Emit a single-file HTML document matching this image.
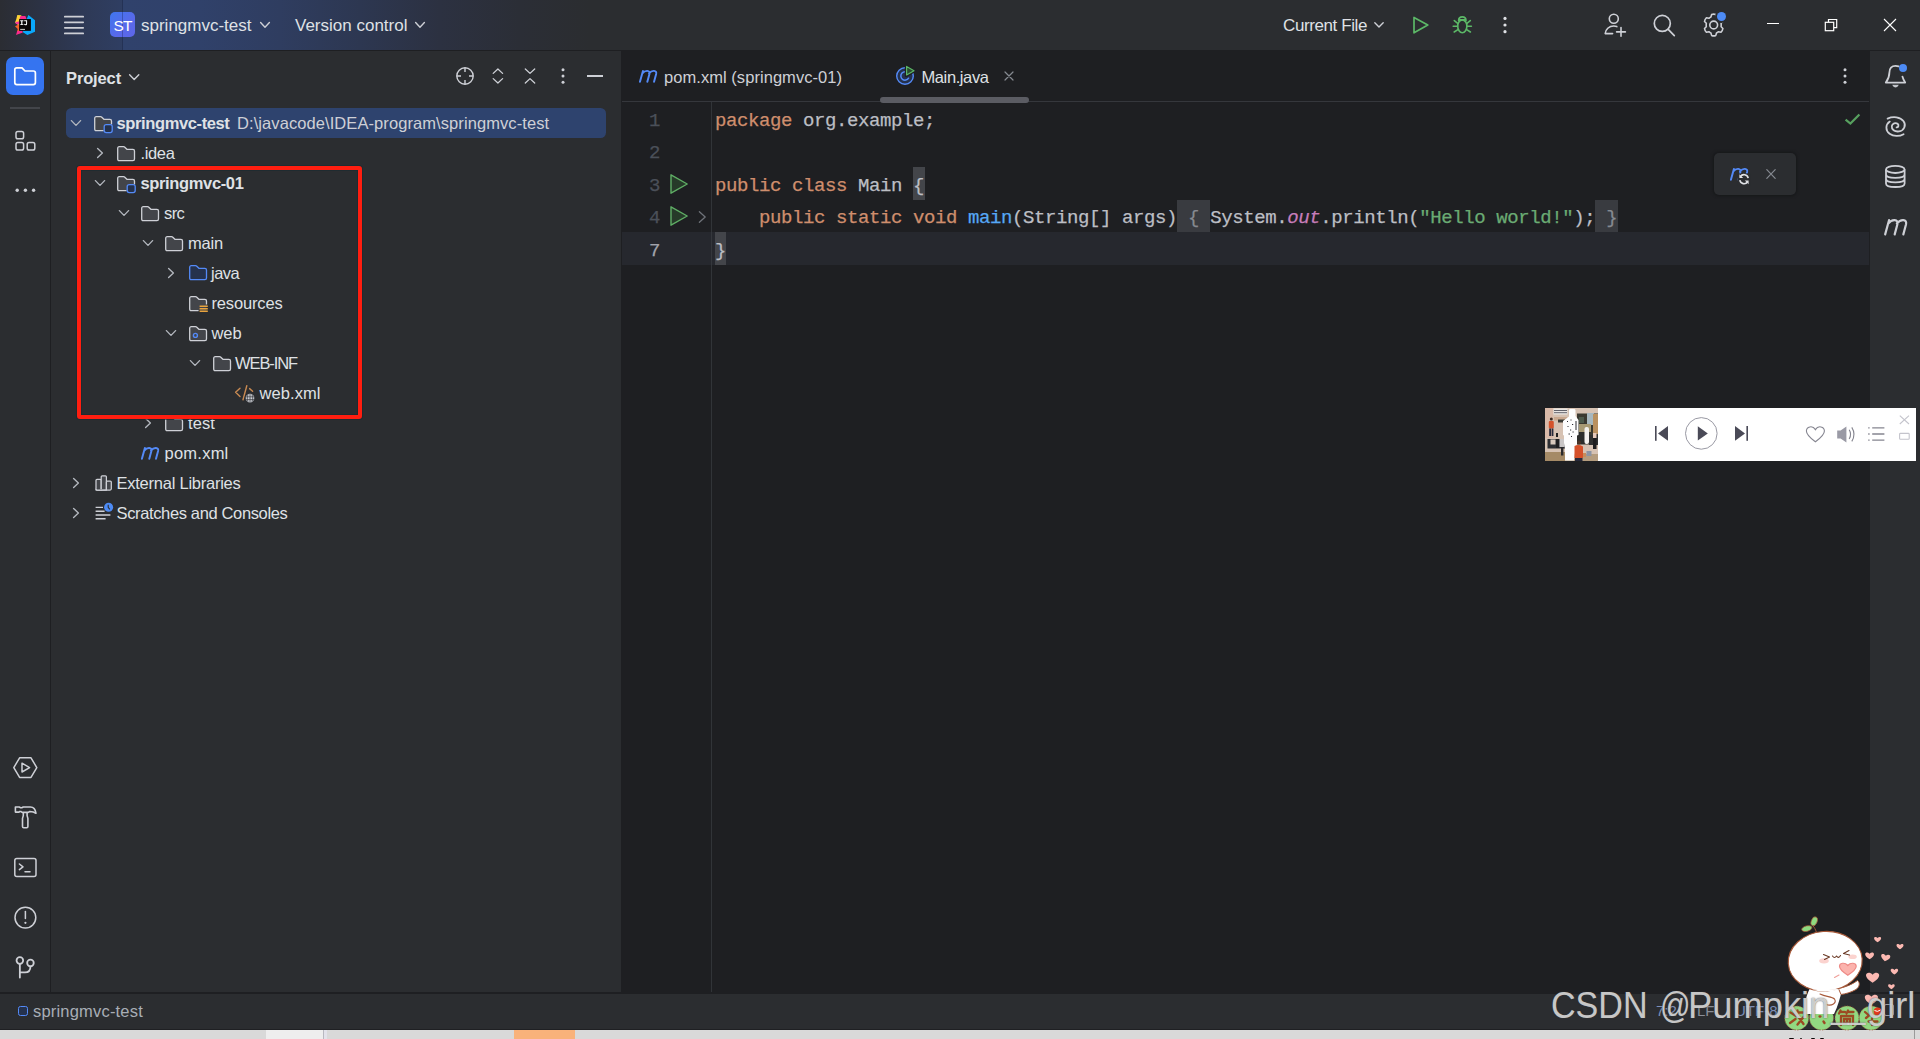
<!DOCTYPE html>
<html>
<head>
<meta charset="utf-8">
<title>springmvc-test</title>
<style>
*{box-sizing:border-box;margin:0;padding:0}
html,body{width:1920px;height:1039px;overflow:hidden;background:#2b2d30}
body{position:relative;font-family:"Liberation Sans",sans-serif;font-size:16px;color:#dfe1e5;-webkit-font-smoothing:antialiased}
.abs{position:absolute}
svg{position:absolute;overflow:visible}
.t{position:absolute;white-space:pre;line-height:20px;height:20px}
/* ---------- main blocks ---------- */
#titlebar{left:0;top:0;width:1920px;height:50px;background:#2b2d30}
#titlegrad{left:0;top:0;width:640px;height:50px;background:linear-gradient(90deg,#2b2d33 0px,#2c3244 40px,#2e3955 80px,#2f3e62 122px,#30426c 123px,#30416a 200px,#2f3d60 280px,#2d3751 360px,#2c3141 440px,#2b2e36 520px,#2b2d30 590px)}
#hline-top{left:0;top:50px;width:1920px;height:1px;background:#1e1f22}
#leftstrip{left:0;top:51px;width:50px;height:942px;background:#2b2d30}
#vline-left{left:50px;top:51px;width:1px;height:942px;background:#1e1f22}
#project{left:51px;top:51px;width:570px;height:942px;background:#2b2d30}
#editor{left:621px;top:51px;width:1249px;height:942px;background:#1e1f22}
#rightstrip{left:1870px;top:51px;width:50px;height:942px;background:#2b2d30}
#hline-bot{left:0;top:992px;width:1920px;height:2px;background:#1e1f22}
#status{left:0;top:994px;width:1920px;height:35px;background:#2b2d30}
#status-shadow{left:0;top:1029px;width:1920px;height:1px;background:#1f2023}
#taskbar{left:0;top:1030px;width:1920px;height:9px;background:#d9d9d9}
</style>
</head>
<body>
<!-- ================= MAIN BLOCKS ================= -->
<div id="titlebar" class="abs"></div>
<div id="titlegrad" class="abs"></div>
<div id="hline-top" class="abs"></div>
<div id="leftstrip" class="abs"></div>
<div id="vline-left" class="abs"></div>
<div id="project" class="abs"></div>
<div id="editor" class="abs"></div>
<div id="rightstrip" class="abs"></div>
<div id="hline-bot" class="abs"></div>
<div id="status" class="abs"></div>
<div id="status-shadow" class="abs"></div>
<div id="taskbar" class="abs"></div>

<!-- ================= TITLE BAR ================= -->
<!-- IJ logo -->
<svg style="left:10px;top:10px" width="30" height="30" viewBox="10 10 30 30">
  <path d="M17.3 15 L21.5 15.3 L19.5 19.5 L19.3 26 L15 22.6 L16.2 19.5 Z" fill="#fcd236"/>
  <path d="M20.6 15.9 L25.4 16 L26.6 19.3 L19.4 19.3 Z" fill="#fb2a8c"/>
  <path d="M15.2 22.3 L19.3 21.3 L19.3 24.5 L16 24 Z" fill="#f7349c"/>
  <path d="M15 26.3 L19.3 24.3 L19.3 31 L17 31.6 L17.8 29 Z" fill="#f9642a"/>
  <path d="M17.2 31 L22.4 30.8 L22.8 32.4 L16 35 Z" fill="#fb2a8c"/>
  <path d="M28.4 15 L35 20.3 L35 31.7 L27.4 35.1 L22.9 32.2 L23 30.7 L30.8 30.7 L30.8 19.2 L26.6 19.2 Z" fill="#0aa8fb"/>
  <rect x="19.2" y="19.1" width="11.6" height="11.6" fill="#0b0606"/>
  <path d="M20.2 20.3h3.2v0.9h-1v3h1v0.9h-3.2v-0.9h1v-3h-1z M24.2 20.3h2.9v3.4c0 1-.6 1.5-1.5 1.5c-.8 0-1.3-.3-1.6-.8l.7-.6c.2.3.4.5.8.5c.4 0 .6-.2.6-.7v-2.4h-1.9z" fill="#fff"/>
  <rect x="20.2" y="28.9" width="4.8" height="0.9" fill="#e8e4e0"/>
</svg>
<!-- hamburger -->
<svg style="left:60px;top:10px" width="30" height="30" viewBox="60 10 30 30" fill="none" stroke="#ced0d6" stroke-width="1.7" stroke-linecap="round">
  <path d="M64.8 16.7H83.2M64.8 22.3H83.2M64.8 27.8H83.2M64.8 33.4H83.2"/>
</svg>
<!-- ST badge -->
<div class="abs" style="left:110px;top:12px;width:25px;height:25px;border-radius:5px;background:linear-gradient(135deg,#3f76ee 0%,#5869ea 60%,#5d66e9 100%)"></div>
<div class="abs" style="left:122px;top:0;width:1px;height:50px;background:rgba(10,16,40,.28)"></div>
<div class="t" style="left:113.6px;top:15.5px;font-size:15.5px;letter-spacing:-1px;color:#fff">ST</div>
<div class="t" style="left:141px;top:16px;font-size:17px">springmvc-test</div>
<svg style="left:258px;top:18px" width="14" height="14" viewBox="258 18 14 14" fill="none" stroke="#ced0d6" stroke-width="1.4" stroke-linecap="round" stroke-linejoin="round"><path d="M260.6 22.6L265 27.2L269.4 22.6"/></svg>
<div class="t" style="left:295px;top:16px;font-size:17px">Version control</div>
<svg style="left:413px;top:18px" width="14" height="14" viewBox="413 18 14 14" fill="none" stroke="#ced0d6" stroke-width="1.4" stroke-linecap="round" stroke-linejoin="round"><path d="M415.6 22.6L420 27.2L424.4 22.6"/></svg>

<!-- right side of title bar -->
<div class="t" style="left:1283px;top:16px;font-size:17px;letter-spacing:-0.4px">Current File</div>
<svg style="left:1372px;top:18px" width="14" height="14" viewBox="1372 18 14 14" fill="none" stroke="#ced0d6" stroke-width="1.4" stroke-linecap="round" stroke-linejoin="round"><path d="M1374.8 22.8L1379 27L1383.2 22.8"/></svg>
<!-- run -->
<svg style="left:1408px;top:12px" width="26" height="26" viewBox="1408 12 26 26" fill="none" stroke="#5cb867" stroke-width="1.7" stroke-linejoin="round"><path d="M1414 17.4V32.8L1427.8 25Z"/></svg>
<!-- debug bug -->
<svg style="left:1450px;top:12px" width="26" height="26" viewBox="1450 12 26 26" fill="none" stroke="#5cb867" stroke-width="1.6" stroke-linecap="round" stroke-linejoin="round">
  <ellipse cx="1462.3" cy="26.3" rx="4.6" ry="6.4"/>
  <path d="M1458.6 20.6C1458.6 15.6 1466 15.6 1466 20.6"/>
  <path d="M1459.3 19.9H1465.3"/>
  <path d="M1457.7 23.3L1454.3 20.6M1466.9 23.3L1470.3 20.6M1457.6 26.3H1453.2M1467 26.3H1471.4M1457.9 29.6L1454.2 32M1466.7 29.6L1470.4 32"/>
</svg>
<!-- kebab -->
<svg style="left:1498px;top:12px" width="14" height="26" viewBox="1498 12 14 26" fill="#dfe1e5"><circle cx="1505" cy="18.4" r="1.6"/><circle cx="1505" cy="25" r="1.6"/><circle cx="1505" cy="31.7" r="1.6"/></svg>
<!-- add user -->
<svg style="left:1600px;top:10px" width="30" height="30" viewBox="1600 10 30 30" fill="none" stroke="#ced0d6" stroke-width="1.6" stroke-linecap="round" stroke-linejoin="round">
  <circle cx="1613.8" cy="18.8" r="4.5"/>
  <path d="M1616.8 26.6C1615.8 26.2 1614.8 26 1613.8 26C1609 26 1605.4 29.4 1605.2 33.6H1612.6"/>
  <path d="M1621 27.6V36.2M1616.6 31.9H1625.4"/>
</svg>
<!-- search -->
<svg style="left:1650px;top:10px" width="30" height="30" viewBox="1650 10 30 30" fill="none" stroke="#ced0d6" stroke-width="1.7" stroke-linecap="round"><circle cx="1662.3" cy="23.4" r="8"/><path d="M1668.2 29.4L1674.3 35.6"/></svg>
<!-- settings gear -->
<svg style="left:1700px;top:10px" width="30" height="30" viewBox="1700 10 30 30" fill="none" stroke="#ced0d6" stroke-width="1.6" stroke-linejoin="round">
  <path d="M1711.6 14.6 Q1713.7 13.7 1715.8 14.6 L1716.5 17 Q1717.6 17.5 1718.5 18.3 L1721 17.7 Q1722.6 19.3 1722.9 21.5 L1721.1 23.3 Q1721.3 25 1721.1 26.7 L1722.9 28.5 Q1722.6 30.7 1721 32.3 L1718.5 31.7 Q1717.6 32.5 1716.5 33 L1715.8 35.4 Q1713.7 36.3 1711.6 35.4 L1710.9 33 Q1709.8 32.5 1708.9 31.7 L1706.4 32.3 Q1704.8 30.7 1704.5 28.5 L1706.3 26.7 Q1706.1 25 1706.3 23.3 L1704.5 21.5 Q1704.8 19.3 1706.4 17.7 L1708.9 18.3 Q1709.8 17.5 1710.9 17 Z"/>
  <circle cx="1713.7" cy="25" r="3.9"/>
</svg>
<div class="abs" style="left:1715px;top:10.3px;width:13px;height:13px;border-radius:50%;background:#2b2d30"></div>
<div class="abs" style="left:1717.3px;top:12.3px;width:9px;height:9px;border-radius:50%;background:#4d8bf5"></div>
<!-- window controls -->
<div class="abs" style="left:1767px;top:23px;width:12px;height:1.3px;background:#fff"></div>
<svg style="left:1820px;top:14px" width="22" height="22" viewBox="1820 14 22 22" fill="none" stroke="#fff" stroke-width="1.2"><path d="M1828.5 22V19.5H1836.7V27.7H1834"/><rect x="1825.3" y="22.3" width="8.4" height="8.4"/></svg>
<svg style="left:1880px;top:15px" width="20" height="20" viewBox="1880 15 20 20" fill="none" stroke="#fff" stroke-width="1.1"><path d="M1884 19L1896 31M1896 19L1884 31"/></svg>


<!-- ================= LEFT STRIP ================= -->
<!-- project button (active) -->
<div class="abs" style="left:6px;top:57px;width:38px;height:38px;border-radius:7px;background:#3574f0"></div>
<svg style="left:12px;top:64px" width="26" height="24" viewBox="12 64 26 24" fill="none" stroke="#fff" stroke-width="1.7" stroke-linejoin="round"><path d="M14.8 69.8Q14.8 67.8 16.8 67.8H22L25 71H33.4Q35.4 71 35.4 73V82.6Q35.4 84.6 33.4 84.6H16.8Q14.8 84.6 14.8 82.6Z"/></svg>
<div class="abs" style="left:10px;top:107px;width:30px;height:1.5px;background:#43454a"></div>
<!-- structure icon -->
<svg style="left:12px;top:128px" width="26" height="26" viewBox="12 128 26 26" fill="none" stroke="#ced0d6" stroke-width="1.5"><rect x="16" y="131.4" width="7.6" height="7.4" rx="1.8"/><rect x="16" y="142.6" width="7.6" height="7.4" rx="1.8"/><rect x="27.2" y="142.6" width="7.6" height="7.4" rx="1.8"/></svg>
<!-- more -->
<svg style="left:12px;top:180px" width="26" height="20" viewBox="12 180 26 20" fill="#ced0d6"><circle cx="17.2" cy="190.3" r="1.7"/><circle cx="25.4" cy="190.3" r="1.7"/><circle cx="33.6" cy="190.3" r="1.7"/></svg>
<!-- services/run -->
<svg style="left:10px;top:753px" width="30" height="30" viewBox="10 753 30 30" fill="none" stroke="#ced0d6" stroke-width="1.5" stroke-linejoin="round"><path d="M19.6 757.8H31L36.8 767.6L31 777.4H19.6L13.8 767.6Z"/><path d="M22 763.2V772L29.6 767.6Z"/></svg>
<!-- build hammer -->
<svg style="left:10px;top:803px" width="30" height="30" viewBox="10 803 30 30" fill="none" stroke="#ced0d6" stroke-width="1.6" stroke-linejoin="round" stroke-linecap="round"><path d="M15.4 807H19.2L20.6 807.7H21.8L23.2 807H30.4C33.6 807 35.5 809.7 36 813.3C34.2 811.9 32 811.5 29.8 811.5L28.2 812.4H22.2L20.8 811.5H19.8L19 812.1H15.4Z"/><path d="M23.3 812.8V815.6L22.5 818.4V826.5Q22.5 827.7 23.7 827.7H26.7Q27.9 827.7 27.9 826.5V818.4L27.1 815.6V812.8"/></svg>
<!-- terminal -->
<svg style="left:10px;top:853px" width="30" height="30" viewBox="10 853 30 30" fill="none" stroke="#ced0d6" stroke-width="1.5" stroke-linejoin="round" stroke-linecap="round"><rect x="14.8" y="858.6" width="21.2" height="18" rx="2"/><path d="M19.4 864L23 866.8L19.4 869.6M25 871.8H30"/></svg>
<!-- problems -->
<svg style="left:10px;top:903px" width="30" height="30" viewBox="10 903 30 30" fill="none" stroke="#ced0d6" stroke-width="1.5" stroke-linecap="round"><circle cx="25.4" cy="917.6" r="10.4"/><path d="M25.4 911.6V918.6"/><circle cx="25.4" cy="922.8" r="1.1" fill="#ced0d6" stroke="none"/></svg>
<!-- git -->
<svg style="left:10px;top:953px" width="30" height="30" viewBox="10 953 30 30" fill="none" stroke="#ced0d6" stroke-width="1.8" stroke-linecap="round"><circle cx="19.85" cy="960.5" r="3.3"/><circle cx="30.45" cy="963" r="3.3"/><path d="M19.85 964V977.6M30.45 966.4C30.45 970.6 28.4 972.3 25 972.3H20"/></svg>

<!-- ================= PROJECT PANEL ================= -->
<!--PROJECT-START-->
<svg width="0" height="0" style="left:0;top:0"><defs>
<path id="fold" d="M2.3 0.7H6.6Q7.3 0.7 7.8 1.2L9.9 3.3H15.9Q17.5 3.3 17.5 4.9V13Q17.5 14.6 15.9 14.6H2.3Q0.7 14.6 0.7 13V2.3Q0.7 0.7 2.3 0.7Z"/>
<path id="foldcut" d="M2.3 0.7H6.6Q7.3 0.7 7.8 1.2L9.9 3.3H15.9Q17.5 3.3 17.5 4.9V8.6M9.6 14.6H2.3Q0.7 14.6 0.7 13V2.3Q0.7 0.7 2.3 0.7"/>
<path id="mvn" d="M0.9 11.8L3.9 0.9M3.3 3.5C4.9 1.5 6.8 0.8 8.3 0.9C10.1 1 10.8 2.3 10.4 4L8.3 11.8M10 3.5C11.6 1.5 13.5 0.8 15 0.9C16.8 1 17.5 2.3 17.1 4L15 11.8"/>
<path id="chd" d="M-4.6 -2.4L0 2.4L4.6 -2.4"/>
<path id="chr" d="M-2.4 -4.6L2.4 0L-2.4 4.6"/>
</defs></svg>
<div class="t" style="left:66px;top:67.6px;font-size:16.5px;font-weight:700;letter-spacing:-0.13px">Project</div>
<svg style="left:127px;top:70px" width="14" height="14" viewBox="-7 -7 14 14" fill="none" stroke="#ced0d6" stroke-width="1.4" stroke-linecap="round" stroke-linejoin="round"><use href="#chd" x="0.2" y="0.2"/></svg>
<svg style="left:452px;top:63px" width="26" height="26" viewBox="452 63 26 26" fill="none" stroke="#ced0d6" stroke-width="1.4"><circle cx="465" cy="76" r="8.2"/><path d="M465 67.8V72M465 80V84.2M456.8 76H461M469 76H473.2"/></svg>
<svg style="left:488px;top:63px" width="20" height="26" viewBox="488 63 20 26" fill="none" stroke="#ced0d6" stroke-width="1.3" stroke-linecap="round" stroke-linejoin="round"><path d="M493.2 73.4L497.9 69L502.6 73.4M493.2 78.6L497.9 83L502.6 78.6"/></svg>
<svg style="left:520px;top:63px" width="20" height="26" viewBox="520 63 20 26" fill="none" stroke="#ced0d6" stroke-width="1.3" stroke-linecap="round" stroke-linejoin="round"><path d="M525.3 69L530 73.4L534.7 69M525.3 83L530 78.6L534.7 83"/></svg>
<svg style="left:556px;top:63px" width="14" height="26" viewBox="556 63 14 26" fill="#ced0d6"><circle cx="563" cy="69.7" r="1.5"/><circle cx="563" cy="76" r="1.5"/><circle cx="563" cy="82.3" r="1.5"/></svg>
<div class="abs" style="left:587px;top:75.2px;width:16px;height:1.6px;background:#ced0d6"></div>
<div class="abs" style="left:66px;top:107.5px;width:540px;height:30px;border-radius:5.5px;background:#2e436e"></div>
<svg style="left:69px;top:116.3px" width="14" height="14" viewBox="-7 -7 14 14" fill="none" stroke="#b4b8bf" stroke-width="1.35" stroke-linecap="round" stroke-linejoin="round"><use href="#chd"/></svg>
<svg style="left:94px;top:115.6px" width="22" height="20" viewBox="0 0 22 20" stroke-width="1.3" stroke-linejoin="round"><use href="#fold" fill="#43454a" stroke="none"/><use href="#foldcut" fill="none" stroke="#ced0d6"/><rect x="10.2" y="8.6" width="8" height="8" rx="2" fill="#25324d" stroke="#548af7" stroke-width="1.3"/></svg>
<div class="t" style="left:116.5px;top:113px;font-size:16.5px;font-weight:700;letter-spacing:-0.38px;">springmvc-test</div>
<div class="t" style="left:237px;top:113px;font-size:16.5px;letter-spacing:0.08px;color:#ced0d6;">D:\javacode\IDEA-program\springmvc-test</div>
<svg style="left:92.8px;top:146px" width="14" height="14" viewBox="-7 -7 14 14" fill="none" stroke="#b4b8bf" stroke-width="1.35" stroke-linecap="round" stroke-linejoin="round"><use href="#chr"/></svg>
<svg style="left:117px;top:145.6px" width="22" height="20" viewBox="0 0 22 20" stroke-width="1.3" stroke-linejoin="round"><use href="#fold" fill="#43454a" stroke="#ced0d6"/></svg>
<div class="t" style="left:140.5px;top:143px;font-size:16.5px;letter-spacing:-0.36px;">.idea</div>
<svg style="left:93px;top:176.2px" width="14" height="14" viewBox="-7 -7 14 14" fill="none" stroke="#b4b8bf" stroke-width="1.35" stroke-linecap="round" stroke-linejoin="round"><use href="#chd"/></svg>
<svg style="left:117px;top:175.6px" width="22" height="20" viewBox="0 0 22 20" stroke-width="1.3" stroke-linejoin="round"><use href="#fold" fill="#43454a" stroke="none"/><use href="#foldcut" fill="none" stroke="#ced0d6"/><rect x="10.2" y="8.6" width="8" height="8" rx="2" fill="#25324d" stroke="#548af7" stroke-width="1.3"/></svg>
<div class="t" style="left:140.5px;top:173px;font-size:16.5px;font-weight:700;letter-spacing:-0.36px;">springmvc-01</div>
<svg style="left:117px;top:206.2px" width="14" height="14" viewBox="-7 -7 14 14" fill="none" stroke="#b4b8bf" stroke-width="1.35" stroke-linecap="round" stroke-linejoin="round"><use href="#chd"/></svg>
<svg style="left:141px;top:205.6px" width="22" height="20" viewBox="0 0 22 20" stroke-width="1.3" stroke-linejoin="round"><use href="#fold" fill="#43454a" stroke="#ced0d6"/></svg>
<div class="t" style="left:164px;top:203px;font-size:16.5px;letter-spacing:-0.6px;">src</div>
<svg style="left:141px;top:236.2px" width="14" height="14" viewBox="-7 -7 14 14" fill="none" stroke="#b4b8bf" stroke-width="1.35" stroke-linecap="round" stroke-linejoin="round"><use href="#chd"/></svg>
<svg style="left:165px;top:235.6px" width="22" height="20" viewBox="0 0 22 20" stroke-width="1.3" stroke-linejoin="round"><use href="#fold" fill="#43454a" stroke="#ced0d6"/></svg>
<div class="t" style="left:188px;top:233px;font-size:16.5px;letter-spacing:-0.19px;">main</div>
<svg style="left:163.8px;top:266px" width="14" height="14" viewBox="-7 -7 14 14" fill="none" stroke="#b4b8bf" stroke-width="1.35" stroke-linecap="round" stroke-linejoin="round"><use href="#chr"/></svg>
<svg style="left:189px;top:265.4px" width="22" height="20" viewBox="0 0 22 20" stroke-width="1.3" stroke-linejoin="round"><use href="#fold" fill="#25324d" stroke="#548af7"/></svg>
<div class="t" style="left:211px;top:263px;font-size:16.5px;letter-spacing:-0.5px;">java</div>
<svg style="left:189px;top:295.6px" width="22" height="20" viewBox="0 0 22 20" stroke-width="1.3" stroke-linejoin="round"><use href="#fold" fill="#43454a" stroke="none"/><use href="#foldcut" fill="none" stroke="#ced0d6"/><path d="M10.6 10.3H18.8M10.6 12.8H18.8M10.6 15.3H18.8" stroke="#e8a33e" stroke-width="1.5" fill="none"/></svg>
<div class="t" style="left:211.5px;top:293px;font-size:16.5px;letter-spacing:-0.16px;">resources</div>
<svg style="left:164px;top:326.2px" width="14" height="14" viewBox="-7 -7 14 14" fill="none" stroke="#b4b8bf" stroke-width="1.35" stroke-linecap="round" stroke-linejoin="round"><use href="#chd"/></svg>
<svg style="left:189px;top:325.6px" width="22" height="20" viewBox="0 0 22 20" stroke-width="1.3" stroke-linejoin="round"><use href="#fold" fill="#43454a" stroke="#ced0d6"/><circle cx="6.4" cy="9.4" r="2" fill="none" stroke="#548af7" stroke-width="1.4"/></svg>
<div class="t" style="left:211.5px;top:323px;font-size:16.5px;letter-spacing:-0.09px;">web</div>
<svg style="left:188px;top:356.2px" width="14" height="14" viewBox="-7 -7 14 14" fill="none" stroke="#b4b8bf" stroke-width="1.35" stroke-linecap="round" stroke-linejoin="round"><use href="#chd"/></svg>
<svg style="left:212.6px;top:355.6px" width="22" height="20" viewBox="0 0 22 20" stroke-width="1.3" stroke-linejoin="round"><use href="#fold" fill="#43454a" stroke="#ced0d6"/></svg>
<div class="t" style="left:235px;top:353px;font-size:16.5px;letter-spacing:-1.1px;">WEB-INF</div>
<svg style="left:232px;top:382px" width="28" height="24" viewBox="232 382 28 24" fill="none" stroke-linecap="round" stroke-linejoin="round"><path d="M240 388.2L235.6 392.3L240 396.4M243 399.8L246.8 385.8M249.6 388.6L252.6 391.2" stroke="#c98a52" stroke-width="1.4"/><circle cx="250" cy="398.1" r="5.4" fill="#2b2d30" stroke="none"/><circle cx="250" cy="398.1" r="4.3" fill="#ced0d6" stroke="none"/><path d="M245.8 396.8H254.2M245.8 399.6H254.2M250 393.8V402.4M247.8 394.5Q246.6 398.1 247.8 401.7M252.2 394.5Q253.4 398.1 252.2 401.7" stroke="#43454a" stroke-width="0.8"/></svg>
<div class="t" style="left:259.5px;top:383px;font-size:16.5px;letter-spacing:0.07px;">web.xml</div>
<svg style="left:140.6px;top:416px" width="14" height="14" viewBox="-7 -7 14 14" fill="none" stroke="#b4b8bf" stroke-width="1.35" stroke-linecap="round" stroke-linejoin="round"><use href="#chr"/></svg>
<svg style="left:165px;top:415.6px" width="22" height="20" viewBox="0 0 22 20" stroke-width="1.3" stroke-linejoin="round"><use href="#fold" fill="#43454a" stroke="#ced0d6"/></svg>
<div class="t" style="left:188px;top:413px;font-size:16.5px;letter-spacing:0.1px;">test</div>
<svg style="left:140.8px;top:446.9px" width="18.3" height="12.6" viewBox="0 0 18.3 12.5" fill="none" stroke="#548af7" stroke-width="1.95" stroke-linecap="round" stroke-linejoin="round"><use href="#mvn"/></svg>
<div class="t" style="left:164.5px;top:443px;font-size:16.5px;letter-spacing:0.24px;">pom.xml</div>
<svg style="left:68.8px;top:476px" width="14" height="14" viewBox="-7 -7 14 14" fill="none" stroke="#b4b8bf" stroke-width="1.35" stroke-linecap="round" stroke-linejoin="round"><use href="#chr"/></svg>
<svg style="left:92px;top:473px" width="22" height="20" viewBox="92 473 22 20" fill="#43454a" stroke="#ced0d6" stroke-width="1.25" stroke-linejoin="round"><path d="M96 490V480.3Q96 479.3 97 479.3H100.2Q101.2 479.3 101.2 480.3V490Z"/><path d="M101.2 490V476.8Q101.2 475.8 102.2 475.8H105.4Q106.4 475.8 106.4 476.8V490Z"/><path d="M106.4 490V482Q106.4 481 107.4 481H110.3Q111.3 481 111.3 482V488.8Q111.3 490 110.1 490H97.2Q96 490 96 488.8"/></svg>
<div class="t" style="left:116.5px;top:473px;font-size:16.5px;letter-spacing:-0.24px;">External Libraries</div>
<svg style="left:68.8px;top:506px" width="14" height="14" viewBox="-7 -7 14 14" fill="none" stroke="#b4b8bf" stroke-width="1.35" stroke-linecap="round" stroke-linejoin="round"><use href="#chr"/></svg>
<svg style="left:92px;top:501px" width="24" height="22" viewBox="92 501 24 22" fill="none" stroke="#ced0d6" stroke-width="1.4"><path d="M95.6 507.4H103M95.6 511.2H104.6M95.6 515H110.4M95.6 518.8H105.6"/><circle cx="108.6" cy="507.3" r="4.5" fill="#4d8bf5" stroke="none"/><path d="M108.2 504.8V507.4L109.8 509.4" stroke="#2b2d30" stroke-width="1.1"/></svg>
<div class="t" style="left:116.5px;top:503px;font-size:16.5px;letter-spacing:-0.36px;">Scratches and Consoles</div>
<div class="abs" style="left:77px;top:166px;width:285px;height:253px;border:4px solid #ff1e10;border-radius:3px;box-shadow:0 0 0 1px rgba(24,42,48,.6),inset 0 0 0 1px rgba(24,42,48,.6)"></div>
<!--PROJECT-END-->

<!-- ================= EDITOR ================= -->
<!--EDITOR-START-->
<div class="abs" style="left:622px;top:101px;width:1247px;height:1px;background:#35373c"></div>
<div class="abs" style="left:880px;top:97px;width:149px;height:6px;border-radius:3px;background:#5b5c63"></div>
<svg style="left:638.7px;top:70px" width="18.4" height="12.5" viewBox="0 0 18.3 12.5" fill="none" stroke="#548af7" stroke-width="1.95" stroke-linecap="round" stroke-linejoin="round"><use href="#mvn"/></svg>
<div class="t" style="left:664px;top:67px;font-size:16.5px;letter-spacing:0.05px;color:#ced0d6">pom.xml (springmvc-01)</div>
<svg style="left:893px;top:63px" width="26" height="26" viewBox="893 63 26 26" fill="none"><circle cx="905" cy="76" r="8.3" fill="#25324d" stroke="#548af7" stroke-width="1.4"/><path d="M908.2 73.2A4.2 4.2 0 1 0 908.6 78.2" stroke="#548af7" stroke-width="1.5" stroke-linecap="round"/><path d="M906.3 65.2V75.8L915 70.4Z" fill="#1e1f22" stroke="#1e1f22" stroke-width="3" stroke-linejoin="round"/><path d="M906.6 66.4V75L914 70.7Z" fill="#2a4a2e" stroke="#5cb867" stroke-width="1.2" stroke-linejoin="round"/></svg>
<div class="t" style="left:921.5px;top:67px;font-size:16.5px;letter-spacing:-0.4px">Main.java</div>
<svg style="left:1000px;top:67px" width="18" height="18" viewBox="1000 67 18 18" fill="none" stroke="#868a91" stroke-width="1.2" stroke-linecap="round"><path d="M1005 72L1013 80M1013 72L1005 80"/></svg>
<svg style="left:1838px;top:63px" width="14" height="26" viewBox="1838 63 14 26" fill="#ced0d6"><circle cx="1845" cy="69.7" r="1.5"/><circle cx="1845" cy="76" r="1.5"/><circle cx="1845" cy="82.3" r="1.5"/></svg>
<div class="abs" style="left:711px;top:102px;width:1px;height:890px;background:#313438"></div>
<div class="abs" style="left:622px;top:232px;width:1247px;height:33px;background:#26282e"></div>
<div class="abs" style="left:711px;top:232px;width:1px;height:33px;background:#34373c"></div>
<div class="abs" style="left:715px;top:232px;width:11px;height:33px;background:#43454a"></div>
<div class="abs" style="left:913px;top:167px;width:11.5px;height:33px;background:#43454a"></div>
<div class="abs" style="left:1177px;top:200px;width:33px;height:32px;background:#393b40"></div>
<div class="abs" style="left:1595px;top:200px;width:23px;height:32px;background:#393b40"></div>
<div style="font-family:'Liberation Mono',monospace;font-size:19px;letter-spacing:-0.4px;-webkit-text-stroke:0.25px;line-height:32.5px;height:32.5px;white-space:pre;position:absolute;left:649px;top:104.6px;color:#4b5059">1</div>
<div style="font-family:'Liberation Mono',monospace;font-size:19px;letter-spacing:-0.4px;-webkit-text-stroke:0.25px;line-height:32.5px;height:32.5px;white-space:pre;position:absolute;left:649px;top:137.1px;color:#4b5059">2</div>
<div style="font-family:'Liberation Mono',monospace;font-size:19px;letter-spacing:-0.4px;-webkit-text-stroke:0.25px;line-height:32.5px;height:32.5px;white-space:pre;position:absolute;left:649px;top:169.6px;color:#4b5059">3</div>
<div style="font-family:'Liberation Mono',monospace;font-size:19px;letter-spacing:-0.4px;-webkit-text-stroke:0.25px;line-height:32.5px;height:32.5px;white-space:pre;position:absolute;left:649px;top:202.1px;color:#4b5059">4</div>
<div style="font-family:'Liberation Mono',monospace;font-size:19px;letter-spacing:-0.4px;-webkit-text-stroke:0.25px;line-height:32.5px;height:32.5px;white-space:pre;position:absolute;left:649px;top:234.6px;color:#a1a3ab">7</div>
<div style="font-family:'Liberation Mono',monospace;font-size:19px;letter-spacing:-0.4px;-webkit-text-stroke:0.25px;line-height:32.5px;height:32.5px;white-space:pre;position:absolute;left:715px;top:104.6px"><span style="color:#cf8e6d">package</span><span style="color:#bcbec4"> org.example;</span></div>
<div style="font-family:'Liberation Mono',monospace;font-size:19px;letter-spacing:-0.4px;-webkit-text-stroke:0.25px;line-height:32.5px;height:32.5px;white-space:pre;position:absolute;left:715px;top:169.6px"><span style="color:#cf8e6d">public class</span><span style="color:#bcbec4"> Main {</span></div>
<div style="font-family:'Liberation Mono',monospace;font-size:19px;letter-spacing:-0.4px;-webkit-text-stroke:0.25px;line-height:32.5px;height:32.5px;white-space:pre;position:absolute;left:715px;top:202.1px"><span style="color:#bcbec4">    </span><span style="color:#cf8e6d">public static void </span><span style="color:#56a8f5">main</span><span style="color:#bcbec4">(String[] args)</span><span style="color:#868a91"> { </span><span style="color:#bcbec4">System.</span><span style="color:#c77dbb;font-style:italic">out</span><span style="color:#bcbec4">.println(</span><span style="color:#6aab73">"Hello world!"</span><span style="color:#bcbec4">);</span><span style="color:#868a91"> }</span></div>
<div style="font-family:'Liberation Mono',monospace;font-size:19px;letter-spacing:-0.4px;-webkit-text-stroke:0.25px;line-height:32.5px;height:32.5px;white-space:pre;position:absolute;left:715px;top:234.6px"><span style="color:#bcbec4">}</span></div>
<svg style="left:666px;top:170.6px" width="26" height="26" viewBox="-13 -13 26 26"><path d="M-8 -9.2V9.2L8.2 0Z" fill="#263a29" stroke="#5fad65" stroke-width="1.4" stroke-linejoin="round"/></svg>
<svg style="left:666px;top:203px" width="26" height="26" viewBox="-13 -13 26 26"><path d="M-8 -9.2V9.2L8.2 0Z" fill="#263a29" stroke="#5fad65" stroke-width="1.4" stroke-linejoin="round"/></svg>
<svg style="left:695px;top:209px" width="14" height="16" viewBox="695 209 14 16" fill="none" stroke="#6f737a" stroke-width="1.3" stroke-linecap="round" stroke-linejoin="round"><path d="M699.4 211.8L705.2 217L699.4 222.2"/></svg>
<svg style="left:1842px;top:110px" width="20" height="18" viewBox="1842 110 20 18" fill="none" stroke="#57a05f" stroke-width="2.2"><path d="M1845.6 119.6L1850.4 123.6L1859.4 114.4"/></svg>
<div class="abs" style="left:1714px;top:152.5px;width:82px;height:42.5px;border-radius:5px;background:#2b2d30;box-shadow:0 0 3px 1px rgba(20,21,23,.8)"></div>
<svg style="left:1730px;top:167.8px" width="18.3" height="12.5" viewBox="0 0 18.3 12.5" fill="none" stroke="#548af7" stroke-width="1.95" stroke-linecap="round" stroke-linejoin="round"><use href="#mvn"/></svg>
<svg style="left:1734px;top:169px" width="20" height="20" viewBox="1734 169 20 20" fill="none" stroke="#dfe1e5" stroke-width="1.6" stroke-linejoin="round"><path d="M1737.4 173.4H1750.6V186H1737.4Z" fill="#2b2d30" stroke="none"/><path d="M1740.4 176.6A4.3 4.3 0 0 1 1748.2 178.2M1747.6 181.8A4.3 4.3 0 0 1 1739.8 180.2"/><path d="M1739.4 174.2V178H1743.2Z M1748.6 184.2V180.4H1744.8Z" fill="#dfe1e5" stroke="none"/></svg>
<svg style="left:1762px;top:165px" width="18" height="18" viewBox="1762 165 18 18" fill="none" stroke="#868a91" stroke-width="1.2" stroke-linecap="round"><path d="M1766.8 169.6L1775.2 178.4M1775.2 169.6L1766.8 178.4"/></svg>
<!--EDITOR-END-->

<!-- ================= RIGHT STRIP ================= -->
<!--RIGHTSTRIP-START-->
<svg style="left:1880px;top:60px" width="32" height="32" viewBox="1880 60 32 32" fill="none" stroke="#ced0d6" stroke-width="1.8" stroke-linecap="round" stroke-linejoin="round"><path d="M1898.6 66.4Q1897.2 65.8 1895.5 65.8C1891.6 65.800 1889.4 68.600 1889.400 72.400C1889.400 76.600 1888 79.600 1885.800 82.600H1905.200Q1903.400 80 1902.400 76.600"/><path d="M1893 85.600Q1895.500 88.600 1898 85.600Z" fill="#ced0d6" stroke-width="1"/></svg>
<div class="abs" style="left:1898.6px;top:63.7px;width:8.8px;height:8.8px;border-radius:50%;background:#4d8bf5"></div>
<svg style="left:1880px;top:112px" width="32" height="30" viewBox="1880 112 32 30" fill="none" stroke="#ced0d6" stroke-width="1.8" stroke-linecap="round"><path d="M1887.6 118.6C1893 116.200 1900.4 116.800 1903.6 121.200C1906.4 125.200 1904.200 130.600 1899 131.400C1894.600 132 1891.400 129.400 1891.800 126.200C1892.200 123.400 1895.600 122.200 1897.600 123.800C1899.200 125.200 1898.400 127.400 1896.600 127.400"/><path d="M1889.800 121.600C1885.400 124.600 1885.200 130.600 1889.600 133.800C1893.600 136.600 1899.400 136.600 1903.600 134.200"/></svg>
<svg style="left:1880px;top:160px" width="32" height="32" viewBox="1880 160 32 32" fill="none" stroke="#ced0d6" stroke-width="1.8"><ellipse cx="1895.3" cy="169.4" rx="9.3" ry="3.6"/><path d="M1886 169.400V183.400C1886 188.200 1904.600 188.200 1904.600 183.400V169.400M1886 174.200C1886 179 1904.600 179 1904.600 174.200M1886 178.800C1886 183.600 1904.600 183.600 1904.600 178.800"/></svg>
<svg style="left:1883.7px;top:218.8px" width="23.6" height="16.3" viewBox="0 0 18.3 12.5" preserveAspectRatio="none" fill="none" stroke="#ced0d6" stroke-width="1.7" stroke-linecap="round" stroke-linejoin="round"><use href="#mvn"/></svg>
<!--RIGHTSTRIP-END-->

<!-- ================= STATUS BAR / TASKBAR ================= -->
<!--STATUS-START-->
<div class="abs" style="left:18.3px;top:1006px;width:9.6px;height:9.6px;border-radius:2.4px;background:#25324d;border:1.3px solid #548af7"></div>
<div class="t" style="left:33px;top:1000.8px;font-size:16.5px;letter-spacing:0.19px;color:#a8adb6">springmvc-test</div>
<div class="t" style="left:1656px;top:1001px;font-size:15px;color:#7d8fb8">7:2</div>
<div class="t" style="left:1697px;top:1001px;font-size:15px;color:#8a8f99">LF</div>
<div class="t" style="left:1735px;top:1001px;font-size:15px;color:#7d8fb8">UTF-8</div>
<div class="abs" style="left:266px;top:1030px;width:57px;height:9px;background:#eeeeee"></div>
<div class="abs" style="left:323px;top:1030px;width:1px;height:9px;background:#b8b8c0"></div>
<div class="abs" style="left:324px;top:1030px;width:3px;height:9px;background:#e2e2ea"></div>
<div class="abs" style="left:514px;top:1030px;width:61px;height:9px;background:#f9b27a"></div>
<div class="abs" style="left:1914px;top:1030px;width:1px;height:9px;background:#9a9a9a"></div>
<div class="abs" style="left:1789px;top:1037.8px;width:4.8px;height:1.2px;background:#0a0a0a;border-radius:1px 1px 0 0"></div>
<div class="abs" style="left:1800.3px;top:1037.8px;width:1.7px;height:1.2px;background:#0a0a0a;border-radius:1px 1px 0 0"></div>
<div class="abs" style="left:1811px;top:1037.8px;width:3.9px;height:1.2px;background:#0a0a0a;border-radius:1px 1px 0 0"></div>
<div class="abs" style="left:1820.3px;top:1037.8px;width:4.1px;height:1.2px;background:#0a0a0a;border-radius:1px 1px 0 0"></div>
<!--STATUS-END-->

<!-- ================= OVERLAYS ================= -->
<!--OVERLAYS-START-->
<div class="abs" style="left:1545px;top:408px;width:371px;height:53px;background:#fff"></div>
<svg style="left:1545px;top:408px" width="53" height="53" viewBox="0 0 53 53">
<rect width="53" height="53" fill="#d6c2b3"/>
<rect x="0" y="0" width="8" height="30" fill="#d9b9a8"/>
<rect x="8.500" y="0.500" width="14" height="6" fill="#e9e6e4"/><path d="M9 2.500H22M9 4.700H22" stroke="#55545c" stroke-width="0.900"/>
<rect x="9" y="9" width="13" height="3.500" fill="#c9a88f"/><rect x="13" y="11.500" width="7" height="3" fill="#3a3a34"/>
<rect x="0" y="44" width="20" height="9" fill="#a58a66"/><rect x="20" y="46" width="33" height="7" fill="#b49c7e"/>
<rect x="32" y="5.500" width="21" height="31" fill="#3a3931"/>
<rect x="42" y="5" width="7" height="12" fill="#a7b7be"/><rect x="34" y="9" width="5" height="6" fill="#4d5a4c"/>
<rect x="34" y="16" width="12" height="8" fill="#a89a74"/><rect x="48" y="6" width="5" height="20" fill="#b9905f"/>
<rect x="32" y="24" width="8" height="12" fill="#2c2d2b"/><rect x="44" y="27" width="9" height="10" fill="#2f3030"/>
<rect x="39.500" y="19" width="4.500" height="17" rx="2" fill="#f4f1ee"/>
<rect x="48" y="25" width="3.500" height="5" fill="#e6c9bb"/><rect x="48" y="30" width="3.500" height="11" fill="#1d1d1f"/>
<rect x="2.500" y="31" width="18" height="9.500" fill="#2d2e32"/><rect x="5.500" y="31.500" width="5" height="5" fill="#d8c9bd"/>
<rect x="14.500" y="31" width="5" height="8" fill="#c9c6c6"/><rect x="11" y="31" width="3" height="9" fill="#1f1f21"/>
<rect x="16" y="39" width="2.400" height="8.500" fill="#2a2a2c"/>
<rect x="3.800" y="13" width="5" height="7.500" rx="1" fill="#d5532b"/><circle cx="6.300" cy="11" r="1.500" fill="#3a2a22"/>
<rect x="4.200" y="20.500" width="1.800" height="7.500" fill="#262a3a"/><rect x="6.600" y="20.500" width="1.800" height="7.500" fill="#262a3a"/>
<rect x="11" y="25" width="2" height="4" fill="#222"/>
<path d="M25 1H29.500Q30.500 1 30.500 2.500V8L33.500 12V27L32 27.500V36L30.500 40L29 52.500H20V41L19 35V27.500L18 27V13L24 8.500V2.500Q24 1 25 1Z" fill="#fdfdfd"/>
<path d="M22 13.500h1M25.500 12h1M27 16.500h1.200M22.500 18.500h1M25 22h1.200M27.500 24h1.200M23.500 26h1.400M26 28.500h1M31 13V22" stroke="#2d2d33" stroke-width="1"/>
<circle cx="34" cy="34.500" r="2" fill="#4a3326"/>
<path d="M29.500 38Q33.500 36 38 38.500V50H29.500Z" fill="#d5512a"/><rect x="30" y="50" width="7.500" height="3" fill="#26283a"/>
<rect x="41.500" y="43" width="5" height="5" fill="#8c94a3"/><rect x="38" y="45" width="3" height="4" fill="#c98b5a"/>
</svg>
<svg style="left:1645px;top:415px" width="115" height="38" viewBox="1645 415 115 38">
<rect x="1655" y="426" width="1.600" height="14.800" fill="#4a4a57"/><path d="M1668 426V440.800L1658 433.400Z" fill="#4a4a57"/>
<circle cx="1701.300" cy="433.400" r="15.800" fill="none" stroke="#8d8d99" stroke-width="0.900"/>
<path d="M1697.800 426.200V440.600L1707.800 433.400Z" fill="#4a4a57"/>
<path d="M1735 426V440.800L1745 433.400Z" fill="#4a4a57"/><rect x="1746.400" y="426" width="1.600" height="14.800" fill="#4a4a57"/>
</svg>
<svg style="left:1800px;top:412px" width="116" height="44" viewBox="1800 412 116 44" fill="none" stroke="#858590" stroke-width="1.100">
<path d="M1815.400 441.800C1811.200 438.600 1806.400 435.200 1806.400 431C1806.400 426.600 1812.600 425 1815.400 429.600C1818.200 425 1824.400 426.600 1824.400 431C1824.400 435.200 1819.600 438.600 1815.400 441.800Z"/>
<path d="M1837.200 430.400H1840.600L1846.400 426.400V442.400L1840.600 438.400H1837.200Z" fill="#9a9aa5" stroke="none"/>
<path d="M1849.200 429.800Q1852 434.400 1849.200 439M1851.800 427.400Q1856.200 434.400 1851.800 441.400"/>
<path d="M1868.200 427.800H1869.600M1872.200 427.800H1884.400M1868.200 434H1869.600M1872.200 434H1884.400M1868.200 440.200H1869.600M1872.200 440.200H1884.400" stroke-width="1.300"/>
<path d="M1899.800 415.600L1909 424M1909 415.600L1899.800 424" stroke="#c4c4cc"/>
<rect x="1899.600" y="433.400" width="9.600" height="5.800" rx="0.800" stroke="#c4c4cc"/>
</svg>
<svg style="left:1770px;top:910px;overflow:hidden" width="150" height="120.500" viewBox="1770 910 150 120.500">
<!-- green circles -->
<g fill="#92d981" stroke="#a85a3a" stroke-width="0.800" stroke-dasharray="1.400 1.400"><circle cx="1796.700" cy="1018" r="12"/><circle cx="1821.500" cy="1018" r="12"/><circle cx="1847" cy="1018" r="12"/><circle cx="1871.200" cy="1018" r="12"/></g>
<g fill="none" stroke="#9c4a22" stroke-width="2.300" stroke-linecap="round">
<path d="M1790.500 1012.500L1796 1016M1790 1023L1795.500 1019M1797.500 1010.500V1014M1798 1012.500H1803M1798.500 1017L1803.500 1024M1803.500 1017L1797.500 1024.500"/>
<path d="M1819.500 1016.500h1M1823.500 1021.500l1 1.500"/>
<path d="M1840.500 1010.500L1839 1013.500M1840 1012H1845M1848 1010.500L1846.500 1013.500M1847.500 1012H1853.500M1841 1016V1025M1841 1016H1853V1025M1844 1019H1850V1023H1844ZM1847 1019V1023"/>
<path d="M1865 1012L1869 1015.500L1866 1018M1868.500 1021.500H1877.500M1872 1018.500V1025"/>
</g>
<!-- body -->
<path d="M1810 988C1806 996 1804 1004 1805.500 1014L1834 1014C1838 1006 1840 998 1842 990Z" fill="#fff"/>
<path d="M1820 994C1826 997 1832 996.500 1834.500 999C1837 1003 1832 1006.500 1826 1004.500" fill="#fff" stroke="#a85a3a" stroke-width="1.100" stroke-linecap="round"/>
<!-- arm -->
<path d="M1838.500 988.500C1846 987 1853 984 1857.500 980.500C1860.500 983 1859.500 987 1856 989.500C1851 992.500 1845 994 1841 994.500Z" fill="#fff" stroke="#a85a3a" stroke-width="1" stroke-linejoin="round"/>
<!-- head -->
<ellipse cx="1825.200" cy="961.200" rx="37" ry="29.800" fill="#fff" stroke="#a85a3a" stroke-width="1.100" transform="rotate(-4 1825 961)"/>
<path d="M1812 989.500C1818 992 1832 992.500 1840 989" fill="#fff" stroke="none"/>
<!-- sprout -->
<path d="M1816.500 932.500C1815.500 929.500 1814.500 927.500 1813 926" fill="none" stroke="#a85a3a" stroke-width="1"/>
<ellipse cx="1806.800" cy="928.600" rx="5.200" ry="2.700" fill="#8edb80" stroke="#a85a3a" stroke-width="0.700" transform="rotate(-14 1806.800 928.600)"/>
<ellipse cx="1814.200" cy="921.300" rx="2.900" ry="4.700" fill="#8edb80" stroke="#a85a3a" stroke-width="0.700" transform="rotate(22 1814.200 921.300)"/>
<!-- face -->
<ellipse cx="1824" cy="960.800" rx="4.800" ry="2.600" fill="#fbd3cf"/><ellipse cx="1852.600" cy="956.800" rx="4.200" ry="2.300" fill="#fbd3cf"/>
<path d="M1823.500 954.500L1829.500 957L1824.500 959.500M1832.500 956Q1834.500 959 1836.500 956Q1838.500 959 1840.500 955.500M1849 950.500L1843.500 953.500L1849.500 955" fill="none" stroke="#6b3a26" stroke-width="1.100" stroke-linecap="round" stroke-linejoin="round"/>
<path d="M1847.800 975.200C1843.500 972.500 1839.500 969.500 1839.500 966.300C1839.500 962.800 1844.800 962 1847.800 965.500C1850.800 962 1856.200 962.800 1856.200 966.300C1856.200 969.500 1852 972.500 1847.800 975.200Z" fill="#fbb3ad" stroke="#ee8a86" stroke-width="1.200"/>
<path d="M1834.500 977.500L1839 975" stroke="#f0a09a" stroke-width="1.100" stroke-linecap="round"/>
<!-- floating hearts -->
<g fill="#fcb9b2">
<path id="hrt" d="M0 3.200C-2.800 1.400 -4.400 -0.200 -4.400 -1.800C-4.400 -3.600 -1.800 -4.200 0 -2.200C1.800 -4.200 4.400 -3.600 4.400 -1.800C4.400 -0.200 2.800 1.400 0 3.200Z" transform="translate(1877.600 939.800) scale(0.800)"/>
<use href="#hrt" transform="translate(22.400 7) scale(1)" style="transform-origin:1877.600px 939.800px"/>
</g>
<g fill="#fcb9b2">
<path d="M0 3.200C-2.800 1.400 -4.400 -0.200 -4.400 -1.800C-4.400 -3.600 -1.800 -4.200 0 -2.200C1.800 -4.200 4.400 -3.600 4.400 -1.800C4.400 -0.200 2.800 1.400 0 3.200Z" transform="translate(1900 946.800) scale(0.600)"/>
<path d="M0 3.200C-2.800 1.400 -4.400 -0.200 -4.400 -1.800C-4.400 -3.600 -1.800 -4.200 0 -2.200C1.800 -4.200 4.400 -3.600 4.400 -1.800C4.400 -0.200 2.800 1.400 0 3.200Z" transform="translate(1869.600 956) scale(1)"/>
<path d="M0 3.200C-2.800 1.400 -4.400 -0.200 -4.400 -1.800C-4.400 -3.600 -1.800 -4.200 0 -2.200C1.800 -4.200 4.400 -3.600 4.400 -1.800C4.400 -0.200 2.800 1.400 0 3.200Z" transform="translate(1885.400 958) scale(1.050) rotate(10)"/>
<path d="M0 3.200C-2.800 1.400 -4.400 -0.200 -4.400 -1.800C-4.400 -3.600 -1.800 -4.200 0 -2.200C1.800 -4.200 4.400 -3.600 4.400 -1.800C4.400 -0.200 2.800 1.400 0 3.200Z" transform="translate(1894.400 971.800) scale(0.850)"/>
<path d="M0 3.200C-2.800 1.400 -4.400 -0.200 -4.400 -1.800C-4.400 -3.600 -1.800 -4.200 0 -2.200C1.800 -4.200 4.400 -3.600 4.400 -1.800C4.400 -0.200 2.800 1.400 0 3.200Z" transform="translate(1872.600 978) scale(1.500)"/>
<path d="M0 3.200C-2.800 1.400 -4.400 -0.200 -4.400 -1.800C-4.400 -3.600 -1.800 -4.200 0 -2.200C1.800 -4.200 4.400 -3.600 4.400 -1.800C4.400 -0.200 2.800 1.400 0 3.200Z" transform="translate(1891.400 986.800) scale(0.750)"/>
<path d="M0 3.200C-2.800 1.400 -4.400 -0.200 -4.400 -1.800C-4.400 -3.600 -1.800 -4.200 0 -2.200C1.800 -4.200 4.400 -3.600 4.400 -1.800C4.400 -0.200 2.800 1.400 0 3.200Z" transform="translate(1871.400 1000) scale(1.500)"/>
</g>
<circle cx="1877.600" cy="1011.600" r="4" fill="#e2391c"/><path d="M1874.500 1010.500Q1877.500 1012.500 1880.500 1010" stroke="#fff" stroke-width="1" fill="none"/>
</svg>
<div class="abs" style="left:1884px;top:1004px;width:10px;height:12px;border:1.300px solid #9da0a8;border-radius:2px"></div>
<div style="position:absolute;top:985px;font-size:36.5px;line-height:42px;white-space:pre;color:rgba(226,226,226,.86);text-shadow:0 0 1.5px rgba(60,60,60,.9);transform-origin:0 0;left:1550.6px;transform:scaleX(0.934)">CSDN</div>
<div style="position:absolute;top:985px;font-size:36.5px;line-height:42px;white-space:pre;color:rgba(226,226,226,.86);text-shadow:0 0 1.5px rgba(60,60,60,.9);transform-origin:0 0;left:1659.5px;transform:scaleX(0.825)">@</div>
<div style="position:absolute;top:985px;font-size:36.5px;line-height:42px;white-space:pre;color:rgba(226,226,226,.86);text-shadow:0 0 1.5px rgba(60,60,60,.9);transform-origin:0 0;left:1688px;transform:scaleX(0.9956)">Pumpkin</div>
<div style="position:absolute;top:985px;font-size:36.5px;line-height:42px;white-space:pre;color:rgba(226,226,226,.86);text-shadow:0 0 1.5px rgba(60,60,60,.9);transform-origin:0 0;left:1830.5px;transform:scaleX(0.851)">__</div>
<div style="position:absolute;top:985px;font-size:36.5px;line-height:42px;white-space:pre;color:rgba(226,226,226,.86);text-shadow:0 0 1.5px rgba(60,60,60,.9);transform-origin:0 0;left:1867.1px;transform:scaleX(0.994)">girl</div>
<!--OVERLAYS-END-->
</body>
</html>
